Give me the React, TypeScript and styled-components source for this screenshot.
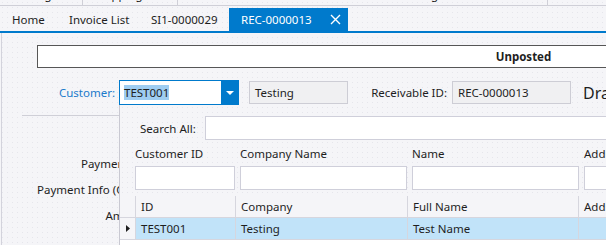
import React from "react";
import styled, { createGlobalStyle } from "styled-components";

const GlobalStyle = createGlobalStyle`
  html, body {
    margin: 0;
    padding: 0;
    background: #f5f5f8;
  }
  body {
    font-family: "Noto Sans", "Open Sans", sans-serif;
    font-size: 11.5px;
    color: #1e1e1e;
  }
`;

const dots = `
  background-image: radial-gradient(#e6e6ec 0.7px, transparent 0.9px);
  background-size: 5px 5px;
`;

const Page = styled.div`
  width: 606px;
  height: 245px;
  overflow: hidden;
  background-color: #f5f5f8;
  ${dots}
`;

// strip of a list that is scrolled mostly out of view
const TopStrip = styled.div`
  display: flex;
  height: 5px;
  border-bottom: 1px solid #cfcfd7;
  overflow: hidden;
`;

const StripCell = styled.div<{ $w: number; $pad: number }>`
  flex: none;
  width: ${(p) => p.$w}px;
  height: 5px;
  box-sizing: border-box;
  padding-left: ${(p) => p.$pad}px;
  border-right: 1px solid #cfcfd7;
  overflow: hidden;
  white-space: nowrap;

  span {
    display: block;
    margin-top: -13px;
    line-height: 16px;
  }
`;

const TabBar = styled.div`
  display: flex;
  height: 23px;
  margin-top: 2px;
  border-bottom: 2px solid #007acc;
`;

const Tab = styled.div<{ $w: number; $active?: boolean }>`
  flex: none;
  display: flex;
  align-items: center;
  justify-content: space-between;
  width: ${(p) => p.$w}px;
  box-sizing: border-box;
  padding: 0 7px 0 12px;
  white-space: nowrap;
  color: ${(p) => (p.$active ? "#ffffff" : "#1e1e1e")};
  background: ${(p) => (p.$active ? "#007acc" : "transparent")};
`;

const Content = styled.div`
  position: relative;
  height: 212px;
  box-sizing: border-box;
  padding-top: 12px;
  margin-left: 1px;
  border-left: 1px solid #d3d3dc;
`;

const StatusBox = styled.div`
  width: 973px;
  height: 23px;
  margin-left: 35px;
  box-sizing: border-box;
  border: 1px solid #565656;
  background: #ffffff;
  display: flex;
  align-items: center;
  justify-content: center;
  font-weight: bold;
`;

const FieldRow = styled.div`
  display: flex;
  align-items: center;
  height: 25px;
  margin-top: 12px;
  white-space: nowrap;
`;

const FieldLabel = styled.div<{ $w: number; $gap: number; $blue?: boolean }>`
  flex: none;
  width: ${(p) => p.$w}px;
  margin-left: ${(p) => p.$gap}px;
  text-align: right;
  color: ${(p) => (p.$blue ? "#1a7acb" : "#1e1e1e")};
`;

const Combo = styled.div`
  flex: none;
  display: flex;
  width: 120px;
  height: 25px;
  margin-left: 4px;
  box-sizing: border-box;
  border: 1px solid #007acc;
  background: #ffffff;
`;

const ComboText = styled.div`
  flex: 1;
  display: flex;
  align-items: center;
  padding-left: 4px;

  span {
    background: #9fcdf1;
    line-height: 15px;
  }
`;

const ComboButton = styled.div`
  flex: none;
  width: 17px;
  background: #007acc;
  display: flex;
  align-items: center;
  justify-content: center;
`;

const ReadOnlyBox = styled.div<{ $w: number; $gap: number }>`
  flex: none;
  width: ${(p) => p.$w}px;
  height: 23px;
  margin-left: ${(p) => p.$gap}px;
  box-sizing: border-box;
  padding-left: 5px;
  border: 1px solid #cdcdd5;
  background: #f0f0f2;
  display: flex;
  align-items: center;
`;

const BigText = styled.div`
  margin-left: 12px;
  font-size: 16px;
`;

const Divider = styled.div`
  width: 140px;
  height: 1px;
  margin: 10px 0 0 20px;
  background: #cfcfd7;
`;

const FormRows = styled.div`
  margin-top: 35px;
`;

const FormLabel = styled.div`
  width: 175px;
  height: 26px;
  line-height: 26px;
  text-align: right;
  white-space: nowrap;
`;

// dropdown list of the customer combo, lies over the form
const Popup = styled.div`
  position: absolute;
  left: 117px;
  top: 72px;
  right: 0;
  bottom: 0;
  display: flex;
  flex-direction: column;
  background-color: #f5f5f8;
  ${dots}
  border-left: 1px solid #c9c9d2;
  white-space: nowrap;
`;

const SearchRow = styled.div`
  display: flex;
  align-items: center;
  height: 24px;
  margin-top: 11px;
  padding-left: 20px;
`;

const SearchLabel = styled.div`
  flex: none;
  width: 65px;
`;

const Input = styled.div<{ $w?: number }>`
  flex: none;
  width: ${(p) => (p.$w ? `${p.$w}px` : "500px")};
  height: 24px;
  box-sizing: border-box;
  border: 1px solid #cfcfda;
  background: #ffffff;
`;

const FilterGrid = styled.div`
  display: grid;
  grid-template-columns: 100px 167px 167px 160px;
  grid-template-rows: 26px 24px;
  column-gap: 5px;
  align-items: center;
  margin-left: 15px;
`;

const DataGrid = styled.div`
  flex: 1;
  margin-top: 6px;
  background: #ffffff;
`;

const GridRow = styled.div<{ $h: number }>`
  display: grid;
  grid-template-columns: 15px 100px 172px 171px 160px;
  height: ${(p) => p.$h}px;
  background: #f5f5f8;
  border-bottom: 1px solid #d6d6de;
`;

const Cell = styled.div<{ $selected?: boolean }>`
  display: flex;
  align-items: center;
  padding-left: 5px;
  border-left: 1px solid #d6d6de;
  background: ${(p) => (p.$selected ? "#c1e3f9" : "transparent")};
`;

const Selector = styled.div`
  display: flex;
  align-items: center;
  justify-content: center;
`;

const CloseIcon = () => (
  <svg width="11" height="11" viewBox="0 0 11 11">
    <path d="M1 1 L10 10 M10 1 L1 10" stroke="#ffffff" strokeWidth="1.4" />
  </svg>
);

const DownArrow = () => (
  <svg width="8" height="4" viewBox="0 0 8 4">
    <path d="M0 0 H8 L4 4 Z" fill="#ffffff" />
  </svg>
);

const RowArrow = () => (
  <svg width="4" height="7" viewBox="0 0 4 7">
    <path d="M0 0 L4 3.5 L0 7 Z" fill="#1e1e1e" />
  </svg>
);

const tabs = [
  { label: "Home", width: 57 },
  { label: "Invoice List", width: 82 },
  { label: "SI1-0000029", width: 90 },
];

const App: React.FC = () => {
  return (
    <Page>
      <GlobalStyle />
      <TopStrip>
        <StripCell $w={83} $pad={18}>
          <span>Billing</span>
        </StripCell>
        <StripCell $w={95} $pad={12}>
          <span>Shipping  Catalog</span>
        </StripCell>
        <StripCell $w={370} $pad={220}>
          <span>Mailing</span>
        </StripCell>
        <StripCell $w={100} $pad={10}>
          <span></span>
        </StripCell>
      </TopStrip>

      <TabBar>
        {tabs.map((t) => (
          <Tab key={t.label} $w={t.width}>
            {t.label}
          </Tab>
        ))}
        <Tab $w={119} $active>
          REC-0000013
          <CloseIcon />
        </Tab>
      </TabBar>

      <Content>
        <StatusBox>Unposted</StatusBox>

        <FieldRow>
          <FieldLabel $w={113} $gap={0} $blue>
            Customer:
          </FieldLabel>
          <Combo>
            <ComboText>
              <span>TEST001</span>
            </ComboText>
            <ComboButton>
              <DownArrow />
            </ComboButton>
          </Combo>
          <ReadOnlyBox $w={99} $gap={10}>
            Testing
          </ReadOnlyBox>
          <FieldLabel $w={90} $gap={9}>
            Receivable ID:
          </FieldLabel>
          <ReadOnlyBox $w={119} $gap={5}>
            REC-0000013
          </ReadOnlyBox>
          <BigText>Draft</BigText>
        </FieldRow>

        <Divider />

        <FormRows>
          <FormLabel>Payment Method:</FormLabel>
          <FormLabel>Payment Info (Check No.):</FormLabel>
          <FormLabel>Amount Due:</FormLabel>
        </FormRows>

        <Popup>
          <SearchRow>
            <SearchLabel>Search All:</SearchLabel>
            <Input />
          </SearchRow>

          <FilterGrid>
            <div>Customer ID</div>
            <div>Company Name</div>
            <div>Name</div>
            <div>Address</div>
            <Input $w={100} />
            <Input $w={167} />
            <Input $w={167} />
            <Input $w={160} />
          </FilterGrid>

          <DataGrid>
            <GridRow $h={21}>
              <Selector />
              <Cell>ID</Cell>
              <Cell>Company</Cell>
              <Cell>Full Name</Cell>
              <Cell>Address</Cell>
            </GridRow>
            <GridRow $h={21}>
              <Selector>
                <RowArrow />
              </Selector>
              <Cell $selected>TEST001</Cell>
              <Cell $selected>Testing</Cell>
              <Cell $selected>Test Name</Cell>
              <Cell $selected></Cell>
            </GridRow>
          </DataGrid>
        </Popup>
      </Content>
    </Page>
  );
};

export default App;
